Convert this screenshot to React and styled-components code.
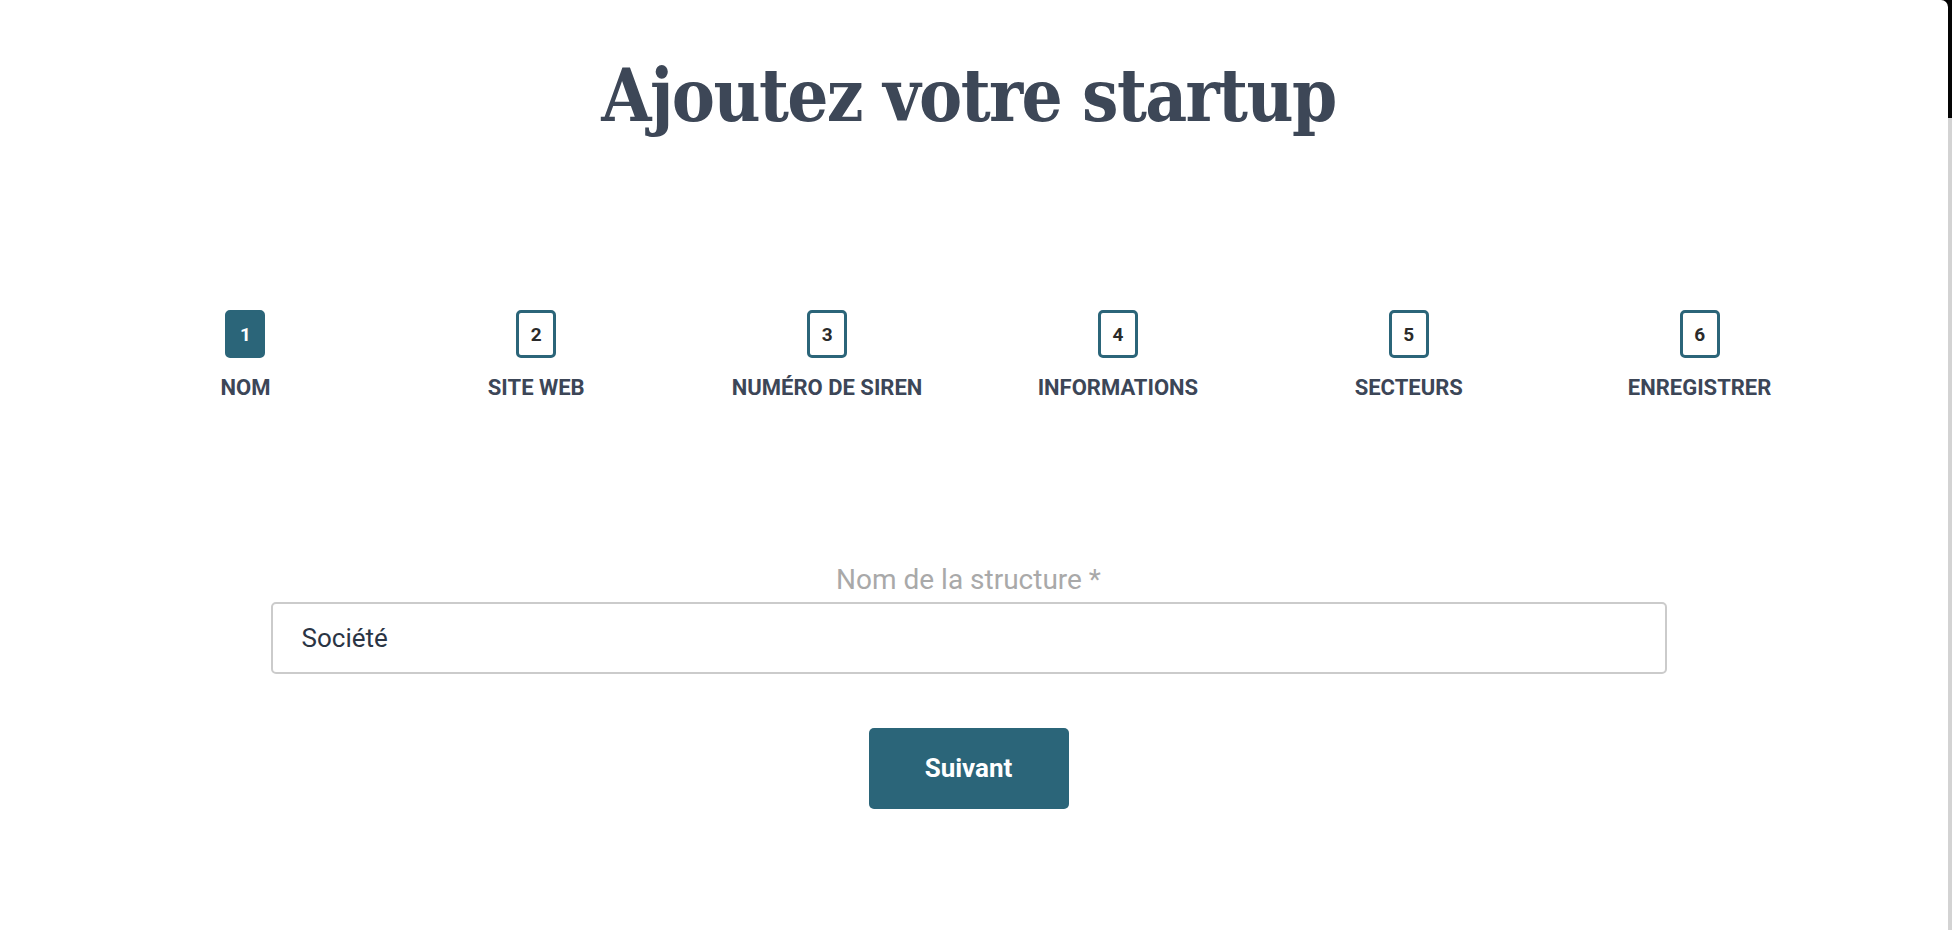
import React from 'react'
import styled, { createGlobalStyle } from 'styled-components'

const GlobalStyle = createGlobalStyle`
  html, body {
    margin: 0;
    padding: 0;
    background: #000;
  }
  * {
    box-sizing: border-box;
  }
`

const Window = styled.div`
  display: flex;
  min-height: 100vh;
`

const Main = styled.main`
  flex: 1;
  background: #fff;
  border-top-right-radius: 7px;
  padding: 60px 11px 0 0;
  font-family: Roboto, 'Liberation Sans', sans-serif;
`

const Track = styled.div`
  width: 4px;
  display: flex;
  flex-direction: column;
  background: #d3d3d3;
`

const Thumb = styled.div`
  height: 118px;
  background: #050505;
`

const Title = styled.h1`
  margin: 0;
  text-align: center;
  font-family: 'Roboto Slab', 'DejaVu Serif Condensed', 'DejaVu Serif', serif;
  font-weight: 700;
  font-size: 72px;
  line-height: 72px;
  letter-spacing: -1.6px;
  color: #3d4757;
`

const Stepper = styled.ol`
  list-style: none;
  margin: 178px 0 0;
  padding: 0 92px 0 100px;
  display: grid;
  grid-template-columns: repeat(6, 1fr);
`

const Step = styled.li`
  display: flex;
  flex-direction: column;
  align-items: center;
`

const StepBox = styled.div`
  width: 40px;
  height: 48px;
  display: flex;
  align-items: center;
  justify-content: center;
  border: 3px solid #2b6579;
  border-radius: 5px;
  background: ${p => (p.$active ? '#2b6579' : '#fff')};
  color: ${p => (p.$active ? '#fff' : '#2a2a2a')};
  font-size: 19px;
  font-weight: 700;
`

const StepLabel = styled.span`
  margin-top: 17px;
  font-size: 22px;
  line-height: 1.2;
  font-weight: 700;
  color: #3c4657;
  text-transform: uppercase;
`

const Form = styled.form`
  width: 1396px;
  margin: 162px auto 0;
  display: flex;
  flex-direction: column;
  align-items: center;
`

const FieldLabel = styled.label`
  font-size: 28px;
  line-height: 1.2;
  color: #a9a9a9;
`

const Input = styled.input`
  width: 100%;
  height: 72px;
  margin-top: 5px;
  padding: 0 29px;
  border: 2px solid #cbcbcb;
  border-radius: 5px;
  background: #fff;
  font-family: Roboto, 'Liberation Sans', sans-serif;
  font-size: 26px;
  color: #2a3444;
  outline: none;
`

const Button = styled.button`
  width: 200px;
  height: 81px;
  margin-top: 54px;
  border: none;
  border-radius: 5px;
  background: #2b6579;
  color: #fff;
  font-family: Roboto, 'Liberation Sans', sans-serif;
  font-size: 26px;
  font-weight: 700;
  cursor: pointer;
`

const steps = ['Nom', 'Site web', 'Numéro de SIREN', 'Informations', 'Secteurs', 'Enregistrer']

const App = () => {
  return (
    <Window>
      <GlobalStyle />
      <Main>
        <Title>Ajoutez votre startup</Title>
        <Stepper>
          {steps.map((label, i) => (
            <Step key={label}>
              <StepBox $active={i === 0}>{i + 1}</StepBox>
              <StepLabel>{label}</StepLabel>
            </Step>
          ))}
        </Stepper>
        <Form onSubmit={e => e.preventDefault()}>
          <FieldLabel htmlFor="structure">Nom de la structure *</FieldLabel>
          <Input id="structure" defaultValue="Société" />
          <Button type="submit">Suivant</Button>
        </Form>
      </Main>
      <Track>
        <Thumb />
      </Track>
    </Window>
  )
}

export default App
